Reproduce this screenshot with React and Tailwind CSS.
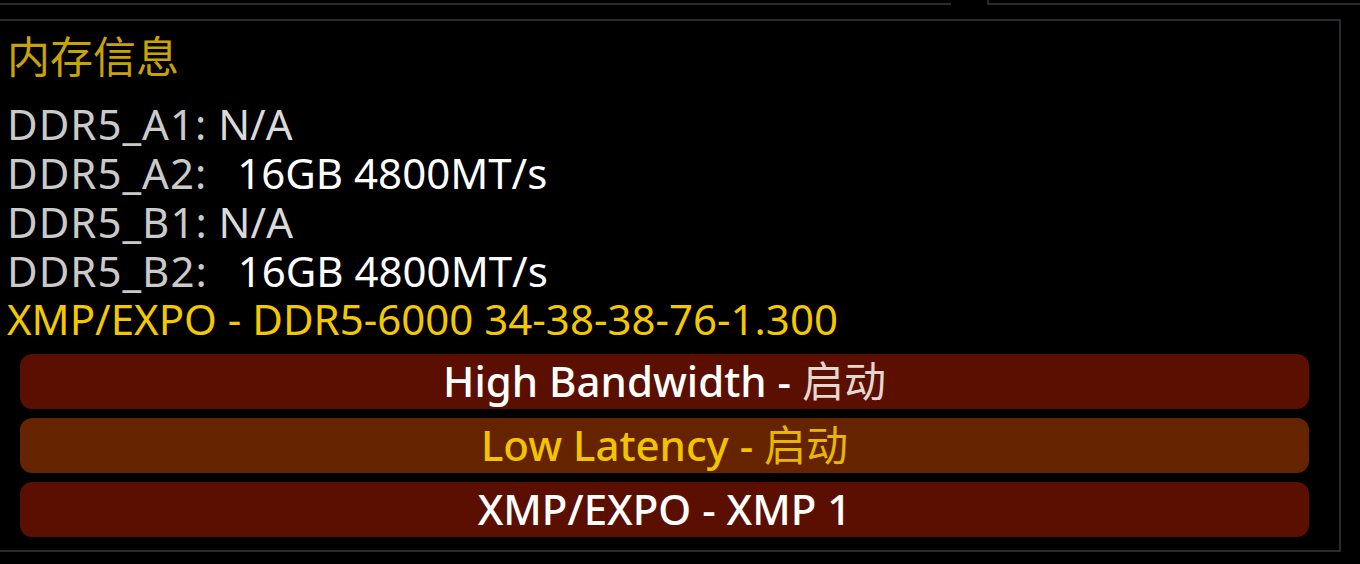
export default function App() {
  const font = { fontFamily: '"Noto Sans", "Noto Sans CJK SC", sans-serif' };
  return (
    <div className="w-[1360px] h-[564px] bg-black overflow-hidden" style={font}>
      <div className="flex h-[5px]">
        <div className="w-[951px] border-b-[2px] border-[#2a2a2f]" />
        <div className="w-[36px]" />
        <div className="flex-1 border-b-[2px] border-l-[2px] border-[#2a2a2f]" />
      </div>
      <div className="mt-[14px] w-[1341px] h-[533px] border-t-[2px] border-r-[2px] border-b-[2px] border-[#2a2a2f] flex flex-col pt-[8px]">
        <div className="pl-[7px] h-[50px] leading-[50px] text-[43px] text-[#c9a20a]" style={{ fontFamily: '"Noto Sans CJK SC", sans-serif' }}>
          内存信息
        </div>
        <div className="mt-[20px] pl-[7px] flex flex-col text-[42px]">
          <div className="h-[49px] leading-[49px] whitespace-nowrap">
            <span className="text-[#cacaca] tracking-[1px]">DDR5_A1:</span>
            <span className="text-[#dadada]"> N/A</span>
          </div>
          <div className="h-[49px] leading-[49px] whitespace-nowrap">
            <span className="text-[#cacaca] tracking-[1px]">DDR5_A2:</span>
            <span className="text-white ml-[30px]">16GB 4800MT/s</span>
          </div>
          <div className="h-[49px] leading-[49px] whitespace-nowrap">
            <span className="text-[#cacaca] tracking-[1px]">DDR5_B1:</span>
            <span className="text-[#dadada]"> N/A</span>
          </div>
          <div className="h-[49px] leading-[49px] whitespace-nowrap">
            <span className="text-[#cacaca] tracking-[1px]">DDR5_B2:</span>
            <span className="text-white ml-[30px]">16GB 4800MT/s</span>
          </div>
          <div className="h-[48px] leading-[48px] whitespace-nowrap text-[#f2c800]">
            XMP/EXPO - DDR5-6000 34-38-38-76-1.300
          </div>
        </div>
        <div className="mt-[11px] ml-[20px] mr-[30px] flex flex-col gap-[9px] text-[42px] font-medium">
          <div className="h-[55px] rounded-[12px] bg-[#5a0f00] flex items-center justify-center pb-[3px] text-white whitespace-nowrap">
            <span>High Bandwidth - <span className="text-[#e6d6d0] font-normal">启动</span></span>
          </div>
          <div className="h-[55px] rounded-[12px] bg-[#652300] flex items-center justify-center pb-[3px] text-[#f2c400] whitespace-nowrap">
            <span>Low Latency - <span className="text-[#e8b800] font-normal">启动</span></span>
          </div>
          <div className="h-[55px] rounded-[12px] bg-[#5a0f00] flex items-center justify-center pb-[3px] text-white whitespace-nowrap">
            <span>XMP/EXPO - XMP 1</span>
          </div>
        </div>
      </div>
    </div>
  );
}
